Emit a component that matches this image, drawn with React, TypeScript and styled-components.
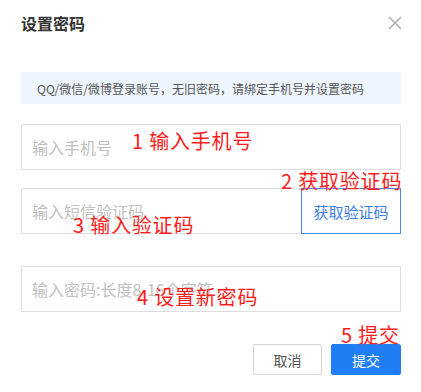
import React from 'react'
import styled, { createGlobalStyle } from 'styled-components'

const GlobalStyle = createGlobalStyle`
  html, body {
    margin: 0;
    padding: 0;
    background: #fff;
    font-family: "Noto Sans CJK SC", "Liberation Sans", sans-serif;
  }
`

const Dialog = styled.div`
  position: relative;
  width: 421px;
  height: 392px;
  box-sizing: border-box;
  padding: 11px 20px 0 21px;
  background: #fff;
`

const Header = styled.div`
  display: flex;
  align-items: center;
  justify-content: space-between;
  height: 24px;
`

const Title = styled.h2`
  margin: 0;
  font-size: 16px;
  line-height: 24px;
  font-weight: 700;
  color: #333;
`

const CloseButton = styled.button`
  display: flex;
  align-items: center;
  justify-content: center;
  width: 16px;
  height: 16px;
  padding: 0;
  margin-right: -2px;
  border: none;
  background: none;
  color: #a8a8a8;
  cursor: pointer;
`

const Notice = styled.div`
  margin-top: 37px;
  height: 32px;
  display: flex;
  align-items: center;
  padding-left: 16px;
  background: #eef5fe;
  font-size: 12px;
  color: #555;
`

const Form = styled.div`
  display: flex;
  flex-direction: column;
  margin-top: 20px;
`

const Field = styled.div<{ $gap: number }>`
  display: flex;
  height: 46px;
  margin-top: ${({ $gap }) => $gap}px;
  box-sizing: border-box;
  border: 1px solid #ddd;
  border-radius: 1px;
`

const Input = styled.input`
  flex: 1;
  min-width: 0;
  border: none;
  outline: none;
  padding: 0 0 0 10px;
  font-family: inherit;
  font-size: 16px;
  color: #333;
  background: transparent;
  &::placeholder {
    color: #c0c0c0;
  }
`

const CodeButton = styled.button`
  width: 100px;
  margin: -1px -1px -1px 0;
  border: 1px solid #4a8af0;
  background: #fff;
  color: #3b7ee8;
  font-family: inherit;
  font-size: 15px;
  cursor: pointer;
`

const Footer = styled.div`
  display: flex;
  justify-content: flex-end;
  gap: 9px;
  margin-top: 32px;
`

const Button = styled.button<{ $primary?: boolean }>`
  width: ${({ $primary }) => ($primary ? 70 : 69)}px;
  height: 31px;
  border-radius: 2px;
  border: 1px solid ${({ $primary }) => ($primary ? '#1f7ef4' : '#d4d4d4')};
  background: ${({ $primary }) => ($primary ? '#1f7ef4' : '#fff')};
  color: ${({ $primary }) => ($primary ? '#fff' : '#555')};
  font-family: inherit;
  font-size: 14px;
  cursor: pointer;
`

const Note = styled.span<{ $x: number; $y: number }>`
  position: absolute;
  left: ${({ $x }) => $x}px;
  top: ${({ $y }) => $y}px;
  font-size: 20px;
  line-height: 22px;
  letter-spacing: 0.8px;
  color: #ff1c1c;
  white-space: nowrap;
  pointer-events: none;
`

export default function App() {
  return (
    <>
      <GlobalStyle />
      <Dialog>
        <Header>
          <Title>设置密码</Title>
          <CloseButton aria-label="关闭">
            <svg width="14" height="14" viewBox="0 0 14 14">
              <path d="M1 1L13 13M13 1L1 13" stroke="currentColor" strokeWidth="1.4" />
            </svg>
          </CloseButton>
        </Header>
        <Notice>QQ/微信/微博登录账号，无旧密码，请绑定手机号并设置密码</Notice>
        <Form>
          <Field $gap={0}>
            <Input placeholder="输入手机号" />
          </Field>
          <Field $gap={18}>
            <Input placeholder="输入短信验证码" />
            <CodeButton>获取验证码</CodeButton>
          </Field>
          <Field $gap={32}>
            <Input type="password" placeholder="输入密码:长度8-16个字符" />
          </Field>
        </Form>
        <Footer>
          <Button>取消</Button>
          <Button $primary>提交</Button>
        </Footer>
        <Note $x={132} $y={130}>1 输入手机号</Note>
        <Note $x={281} $y={170}>2 获取验证码</Note>
        <Note $x={73} $y={214}>3 输入验证码</Note>
        <Note $x={137} $y={286}>4 设置新密码</Note>
        <Note $x={341} $y={324}>5 提交</Note>
      </Dialog>
    </>
  )
}
